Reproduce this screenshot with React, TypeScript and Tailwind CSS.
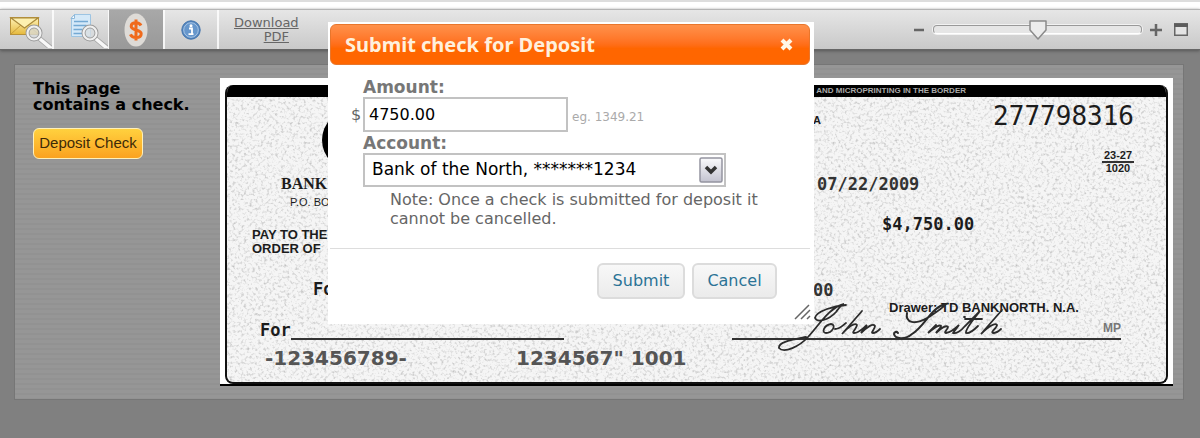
import { useState } from "react";

interface CheckData {
  number: string;
  date: string;
  amount: string;
  drawer: string;
  routing: string;
  micrAccount: string;
}

const check: CheckData = {
  number: "277798316",
  date: "07/22/2009",
  amount: "$4,750.00",
  drawer: "Drawer: TD BANKNORTH. N.A.",
  routing: "-123456789-",
  micrAccount: "1234567\" 1001",
};

const accounts = ["Bank of the North, *******1234"];

function Magnifier() {
  return (
    <g fill="none" strokeLinecap="round">
      <path d="M31 27l11 9" stroke="#a8a8a8" strokeWidth="5" />
      <path d="M31 27l12 10" stroke="#f8f8f8" strokeWidth="3.500" />
      <circle cx="25" cy="21" r="6.5" fill="#d9dde0" fillOpacity="0.75" stroke="#9a9a9a" strokeWidth="4" />
      <circle cx="25" cy="21" r="6.5" stroke="#f0f0f0" strokeWidth="2.200" />
    </g>
  );
}

function MailSearchIcon() {
  return (
    <svg width="43" height="36" viewBox="0 0 43 36" aria-hidden="true">
      <defs>
        <linearGradient id="mail" x1="0" y1="0" x2="0" y2="1">
          <stop offset="0" stopColor="#fff3b8" />
          <stop offset="1" stopColor="#e5b93d" />
        </linearGradient>
      </defs>
      <rect x="1.5" y="5.5" width="28" height="17" fill="url(#mail)" stroke="#b8923a" />
      <path d="M2 22l10-9M29 22l-10-9" stroke="#c79d3c" fill="none" />
      <path d="M2 6l13.500 10L29 6z" fill="#fdf0b0" stroke="#a98a3d" strokeWidth="1.200" />
      <Magnifier />
    </svg>
  );
}

function PageSearchIcon() {
  return (
    <svg width="43" height="36" viewBox="0 0 43 36" aria-hidden="true">
      <path d="M9.500 2.500h16v22h-19v-19z" fill="#d5e9f8" stroke="#9dc4e2" />
      <path d="M9.500 2.500v4h-3.500z" fill="#fff" stroke="#8db8da" />
      <path d="M9 9.500h14M8.500 13.500h13M8.500 17.500h9M8.500 21.500h9" stroke="#74a9d3" strokeWidth="1.500" />
      <Magnifier />
    </svg>
  );
}

function DollarIcon() {
  return (
    <svg width="24" height="34" viewBox="0 0 24 34" aria-hidden="true">
      <ellipse cx="12" cy="17" rx="11.500" ry="16.500" fill="#dedbd7" />
      <path
        d="M17 12.500c-1-2-2.800-2.800-5-2.800-2.800 0-4.800 1.200-4.800 3.500 0 4.800 10 2.800 10 7.600 0 2.500-2.200 3.800-5.200 3.800-2.600 0-4.600-1-5.600-3.200M12 6.500v21"
        fill="none"
        stroke="#f06a1c"
        strokeWidth="3"
      />
    </svg>
  );
}

function InfoIcon() {
  return (
    <svg width="20" height="20" viewBox="0 0 20 20" aria-hidden="true">
      <circle cx="10" cy="10" r="9.200" fill="#5485bd" stroke="#4274ad" />
      <circle cx="10" cy="10" r="7.300" fill="#6797cc" stroke="#a9c6e6" />
      <circle cx="10" cy="5.800" r="1.500" fill="#fff" />
      <path d="M8 8.500h3v5.500M7.500 14.200h5" stroke="#fff" strokeWidth="1.800" fill="none" />
    </svg>
  );
}

function Toolbar() {
  const [zoom, setZoom] = useState(50);

  return (
    <header className="flex h-[41px] items-stretch border-t border-b border-t-[#b5b5b5] border-b-[#666] bg-linear-to-b from-[#e6e6e6] to-[#c9c9c9] shadow-[0_1px_3px_#555]">
      <button aria-label="View envelope" className="flex w-[54px] items-center justify-end border-r-2 border-white/80">
        <MailSearchIcon />
      </button>
      <button aria-label="View page" className="flex w-[55px] items-center justify-end border-r border-white/80">
        <PageSearchIcon />
      </button>
      <button aria-label="Deposit" className="flex w-[54px] items-center justify-center bg-linear-to-b from-[#a8a8a8] to-[#999]">
        <DollarIcon />
      </button>
      <button aria-label="Information" className="flex w-[56px] items-center justify-center border-r-2 border-l-2 border-white/80">
        <InfoIcon />
      </button>
      <a href="#pdf" className="ml-[15px] flex flex-col self-center text-center text-[13px] leading-[14px] text-[#666] underline">
        <span>Download</span>
        <span className="pl-5">PDF</span>
      </a>

      <div className="ml-auto flex items-center pr-3">
        <button aria-label="Zoom out" onClick={() => setZoom(Math.max(0, zoom - 10))}>
          <svg width="12" height="12" viewBox="0 0 12 12"><path d="M1 6h10" stroke="#666" strokeWidth="2.500" /></svg>
        </button>
        <div className="relative mx-2 h-5 w-[209px]">
          <div className="mt-[5px] h-[9px] rounded-sm border border-[#999] border-b-white bg-[#e6e6e6] shadow-[0_0_0_1px_#f2f2f2]" />
          <svg
            className="absolute top-0 -translate-x-1/2"
            style={{ left: `${zoom}%` }}
            width="20"
            height="20"
            viewBox="0 0 20 20"
          >
            <path d="M2 1h16v9l-8 9-8-9z" fill="#ececec" stroke="#8a8a8a" strokeWidth="1.500" strokeLinejoin="round" />
          </svg>
          <input
            type="range"
            aria-label="Zoom"
            value={zoom}
            onChange={(e) => setZoom(Number(e.target.value))}
            className="absolute inset-0 w-full cursor-pointer opacity-0"
          />
        </div>
        <button aria-label="Zoom in" onClick={() => setZoom(Math.min(100, zoom + 10))}>
          <svg width="12" height="12" viewBox="0 0 12 12"><path d="M0 6h12M6 0v12" stroke="#666" strokeWidth="2.500" /></svg>
        </button>
        <button aria-label="Fit to window" className="ml-3">
          <svg width="14" height="13" viewBox="0 0 14 13">
            <rect x="0.750" y="0.750" width="12.500" height="11.500" fill="#e4e4e4" stroke="#666" strokeWidth="1.500" />
            <path d="M0 2.500h14" stroke="#5c5c5c" strokeWidth="3" />
          </svg>
        </button>
      </div>
    </header>
  );
}

function PaperGrain() {
  return (
    <svg className="absolute inset-0 h-full w-full" aria-hidden="true">
      <filter id="grain" x="0" y="0" width="100%" height="100%">
        <feTurbulence type="fractalNoise" baseFrequency="0.35" numOctaves="2" seed="7" />
        <feColorMatrix values="0 0 0 0 0.35  0 0 0 0 0.35  0 0 0 0 0.35  1.5 0 0 0 -0.74" />
      </filter>
      <rect width="100%" height="100%" filter="url(#grain)" />
    </svg>
  );
}

function Signature() {
  return (
    <svg
      className="absolute bottom-[-15px] left-[46px]"
      width="228"
      height="52"
      viewBox="0 0 228 52"
      role="img"
      aria-label="Signature of John Smith"
      fill="none"
      stroke="#2b2b2b"
      strokeWidth="1.800"
      strokeLinecap="round"
    >
      <path d="M68 4C56 5 38 10 37 17c2 5 14 2 21-6 3-4 5-7 8-8C52 6 41 24 30 36 22 45 6 53 1 47c-1-6 12-8 27-11" />
      <path d="M53 23c-7 1-10 9-5 9 6 0 11-8 5-9zM57 28c5 0 8-4 11-6M84 10L64 33c6-7 13-12 15-9 0 3-6 8-3 8 5 0 9-5 13-8l-6 8c6-6 12-10 14-7 0 3-5 7-2 7 3 0 5-2 7-4" />
      <path d="M129 12c-2 10 8 12 20 5 8-5 15-9 19-14-15 3-20 21-34 30-7 6-17 5-18 0 0-2 3-3 4-1" strokeWidth="2" />
      <path d="M158 24l-8 8c6-5 11-9 13-7 0 2-4 5-5 7 5-5 10-8 12-6 0 2-5 6-2 6 6-1 10-5 13-8l-6 8c3 1 8-2 12-7l15-15c-6 8-15 18-14 22 4 1 9-4 12-7M187 18h17M186 16l1 0M224 9L203 33c7-7 14-12 16-9 0 3-7 7-4 8 3 0 6-2 8-4" />
    </svg>
  );
}

function CheckImage() {
  return (
    <section aria-label="Scanned check" className="min-w-0 flex-1 border-b-2 border-black bg-white px-[5px] pt-[7px]">
      <div className="relative overflow-hidden rounded-[8px] border-2 border-t-0 border-[#111] bg-[#f5f5f5] text-[#1c1c1c]">
        <PaperGrain />
        <div className="relative flex h-3 justify-end bg-black pr-[200px] font-['Liberation_Sans',sans-serif] text-[8px] leading-3 font-bold text-[#aaa]">
          AND MICROPRINTING IN THE BORDER
        </div>

        <div className="relative flex">
          <div className="w-[586px] pt-[13px]">
            <div className="ml-[95px] size-[60px] rounded-full bg-black" />
            <p className="mt-1 ml-[54px] font-['Liberation_Serif',serif] text-base leading-5 font-bold">BANK</p>
            <p className="ml-[63px] font-['Liberation_Sans',sans-serif] text-[11px] leading-4">P.O. BOX</p>
            <p className="mt-[18px] ml-[25px] font-['Liberation_Sans',sans-serif] text-[13px] leading-[14px] font-bold">
              PAY TO THE
              <br />
              ORDER OF
            </p>
            <p className="mt-[23px] ml-[86px] font-['DejaVu_Sans_Mono',monospace] text-[17px] leading-5 font-bold">For</p>
          </div>

          <div className="min-w-0 flex-1 pt-[5px] font-['DejaVu_Sans_Mono',monospace] text-[17px] leading-5">
            <div className="flex items-end justify-between pr-8">
              <span className="font-['Liberation_Sans',sans-serif] text-[11px] leading-5 font-bold">A</span>
              <span className="text-[26px] leading-7">{check.number}</span>
            </div>
            <div className="mt-5 mr-8 ml-auto flex w-[32px] flex-col text-center font-['Liberation_Sans',sans-serif] text-[11px] leading-[11px] font-bold">
              <span className="border-b-2 border-[#333]">23-27</span>
              <span>1020</span>
            </div>
            <p className="pl-1 font-bold text-[#333]">{check.date}</p>
            <p className="mt-5 pl-[69px] font-bold">{check.amount}</p>
            <p className="mt-[46px] font-bold text-[#333]">00</p>
            <p className="pl-[76px] font-['Liberation_Sans',sans-serif] text-[13px] leading-4 font-bold">{check.drawer}</p>
          </div>
        </div>

        <div className="relative flex h-6 items-end pr-[45px] pl-[33px]">
          <span className="font-['DejaVu_Sans_Mono',monospace] text-[17px] leading-5 font-bold">For</span>
          <span className="w-[273px] border-b-2 border-[#333]" />
          <div className="relative ml-[168px] flex flex-1 justify-end border-b-2 border-[#333] pb-1 font-['Liberation_Sans',sans-serif] text-xs leading-3 font-bold text-[#777]">
            <Signature />
            MP
          </div>
        </div>

        <div className="relative flex h-[42px] pt-[6px] pl-[38px] font-['DejaVu_Sans',sans-serif] text-[20px] leading-6 font-bold text-[#555]">
          <span className="w-[251px]">{check.routing}</span>
          <span>{check.micrAccount}</span>
        </div>
      </div>
    </section>
  );
}

function DepositDialog() {
  const [amount, setAmount] = useState("4750.00");
  const [account, setAccount] = useState(accounts[0]);

  return (
    <div role="dialog" aria-labelledby="deposit-title" className="absolute top-[22px] left-[328px] w-[486px] bg-white p-[2px] pr-1">
      <div className="flex h-[41px] items-center justify-between rounded-md border border-[#e8762c] bg-linear-to-b from-[#ff914a] to-[#ff6600] to-60% pr-4 pl-[14px]">
        <h2 id="deposit-title" className="font-['Noto_Sans',sans-serif] text-xl font-bold text-[#fff0dc]">
          Submit check for Deposit
        </h2>
        <button aria-label="Close">
          <svg width="13" height="13" viewBox="0 0 13 13">
            <path d="M2 2l9 9M11 2l-9 9" stroke="#fff6e6" strokeWidth="4" />
          </svg>
        </button>
      </div>

      <form onSubmit={(e) => e.preventDefault()}>
        <div className="border-b border-[#ddd] pt-3 pb-5 pl-[33px] text-base text-[#777]">
          <label htmlFor="amount" className="block text-[17px] leading-5 font-bold">Amount:</label>
          <div className="-ml-3 flex items-center">
            <span className="w-3 text-[#666]">$</span>
            <input
              id="amount"
              value={amount}
              onChange={(e) => setAmount(e.target.value)}
              className="h-[35px] w-[205px] border-2 border-[#c2c2c2] px-1 text-black"
            />
            <span className="pt-1 pl-1 text-xs text-[#aaa]">eg. 1349.21</span>
          </div>
          <label htmlFor="account" className="mt-px block text-[17px] leading-5 font-bold">Account:</label>
          <div className="relative w-[363px]">
            <select
              id="account"
              value={account}
              onChange={(e) => setAccount(e.target.value)}
              className="h-[34px] w-full appearance-none border-2 border-[#c2c2c2] bg-white pl-[7px] text-[17px] text-black"
            >
              {accounts.map((name) => (
                <option key={name}>{name}</option>
              ))}
            </select>
            <svg className="pointer-events-none absolute top-1 right-[3px]" width="24" height="26" viewBox="0 0 24 26" aria-hidden="true">
              <defs>
                <linearGradient id="arrow" x1="0" y1="0" x2="0" y2="1">
                  <stop offset="0" stopColor="#fafafc" />
                  <stop offset="1" stopColor="#c3c3d0" />
                </linearGradient>
              </defs>
              <rect x="1" y="1" width="22" height="24" rx="1.500" fill="url(#arrow)" stroke="#9494a0" strokeWidth="1.500" />
              <path d="M7 10l5 5 5-5" fill="none" stroke="#333" strokeWidth="3.500" />
            </svg>
          </div>
          <p className="mt-[3px] ml-[27px] w-[390px] text-base leading-[19px] text-[#666]">
            Note: Once a check is submitted for deposit it cannot be cancelled.
          </p>
        </div>

        <div className="flex justify-end gap-[7px] pt-[14px] pr-[33px] pb-[23px] text-base text-[#2b7396]">
          <button type="submit" className="h-9 w-[88px] rounded-md border-2 border-[#dcdcdc] bg-linear-to-b from-[#f8f8f8] to-[#ebebeb]">
            Submit
          </button>
          <button type="button" className="h-9 w-[85px] rounded-md border-2 border-[#dcdcdc] bg-linear-to-b from-[#f8f8f8] to-[#ebebeb]">
            Cancel
          </button>
        </div>
      </form>
      <svg className="absolute right-[2px] bottom-1 cursor-se-resize" width="18" height="16" viewBox="0 0 18 16" aria-hidden="true">
        <path d="M1 15L15 1M7 15l9-9M13 15l3-3" stroke="#666" strokeWidth="1.500" />
      </svg>
    </div>
  );
}

export default function App() {
  return (
    <div className="relative min-h-screen bg-[#808080] pb-[39px] font-['DejaVu_Sans',sans-serif]">
      <div className="h-[9px] border-t-2 border-[#ddd] bg-white" />
      <Toolbar />
      <main className="mx-4 mt-[14px] ml-[14px] flex border border-[#767676] bg-[repeating-linear-gradient(#969696_0px,#969696_3px,#929292_3px,#929292_5px)] pt-[13px] pr-[10px] pb-[13px] pl-[18px]">
        <aside className="w-[187px] shrink-0 pt-[3px] text-black">
          <p className="text-[16px] leading-4 font-bold">
            This page
            <br />
            contains a check.
          </p>
          <button className="mt-[15px] h-[31px] w-[110px] rounded-md border border-[#fff0b8] bg-linear-to-b from-[#ffd13e] to-[#faa21f] font-['Liberation_Sans',sans-serif] text-[15px] text-[#3d2a08]">
            Deposit Check
          </button>
        </aside>
        <CheckImage />
      </main>
      <DepositDialog />
    </div>
  );
}
